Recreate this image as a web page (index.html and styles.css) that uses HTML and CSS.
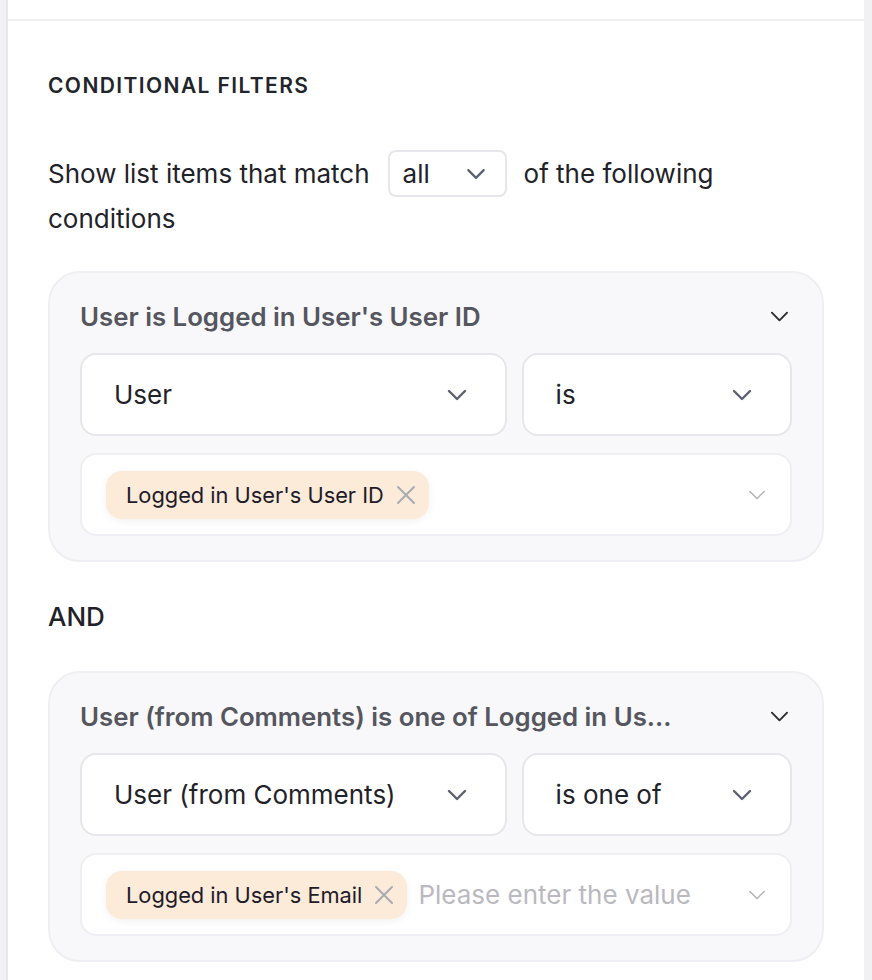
FILE: index.html
```html
<!DOCTYPE html>
<html>
<head>
<meta charset="utf-8">
<link rel="stylesheet" href="styles.css">
</head>
<body>
<div class="panel">
  <div class="prev"></div>
  <section class="filters">
    <h2 class="heading">CONDITIONAL FILTERS</h2>
    <div class="intro"><span>Show list items that match</span><span class="mini-select"><span>all</span><svg class="chev-mini" viewBox="0 0 20 20"><path d="M3 6.5l7 7 7-7"/></svg></span><span>of the following</span><br><span>conditions</span></div>

    <div class="card">
      <div class="card-head">
        <span class="card-title">User is Logged in User's User ID</span>
        <svg class="chev-head" viewBox="0 0 20 20"><path d="M2 6l8 8 8-8"/></svg>
      </div>
      <div class="row">
        <div class="select"><span>User</span><svg class="chev" viewBox="0 0 20 20"><path d="M2 6l8 8 8-8"/></svg></div>
        <div class="select"><span>is</span><svg class="chev" viewBox="0 0 20 20"><path d="M2 6l8 8 8-8"/></svg></div>
      </div>
      <div class="value">
        <span class="tag">Logged in User's User ID<svg class="x" viewBox="0 0 20 20"><path d="M2 2l16 16M18 2L2 18"/></svg></span>
        <span class="placeholder"></span>
        <svg class="chev-light" viewBox="0 0 20 20"><path d="M2 6l8 8 8-8"/></svg>
      </div>
    </div>

    <div class="and">AND</div>

    <div class="card">
      <div class="card-head">
        <span class="card-title">User (from Comments) is one of Logged in Us...</span>
        <svg class="chev-head" viewBox="0 0 20 20"><path d="M2 6l8 8 8-8"/></svg>
      </div>
      <div class="row">
        <div class="select"><span>User (from Comments)</span><svg class="chev" viewBox="0 0 20 20"><path d="M2 6l8 8 8-8"/></svg></div>
        <div class="select"><span>is one of</span><svg class="chev" viewBox="0 0 20 20"><path d="M2 6l8 8 8-8"/></svg></div>
      </div>
      <div class="value">
        <span class="tag">Logged in User's Email<svg class="x" viewBox="0 0 20 20"><path d="M2 2l16 16M18 2L2 18"/></svg></span>
        <span class="placeholder">Please enter the value</span>
        <svg class="chev-light" viewBox="0 0 20 20"><path d="M2 6l8 8 8-8"/></svg>
      </div>
    </div>
  </section>
</div>
</body>
</html>
```
FILE: styles.css
```css
html, body {
  margin: 0;
  padding: 0;
}
body {
  background: #f1f1f4;
  font-family: Inter, "Noto Sans", sans-serif;
  color: #1f2329;
  padding: 0 8px 0 6px;
  height: 980px;
  overflow: hidden;
}
.panel {
  background: #ffffff;
  height: 980px;
  border-left: 2px solid #e7e7eb;
}
.prev {
  height: 19px;
  border-bottom: 2px solid #efeff2;
}
.filters {
  padding: 53px 40px 0 40px;
}
.heading {
  margin: 0;
  font-size: 21px;
  line-height: 24px;
  font-weight: 600;
  letter-spacing: 1.4px;
  color: #22252b;
}
.intro {
  margin: 54px 0 0 0;
  font-size: 26px;
  line-height: 44px;
  color: #1f2329;
  width: 720px;
}
.mini-select {
  display: inline-flex;
  align-items: center;
  justify-content: space-between;
  box-sizing: border-box;
  width: 119px;
  height: 47px;
  margin: -2px 17px -2px 18px;
  padding: 0 18px 0 13px;
  border: 2px solid #e6e6eb;
  border-radius: 8px;
  vertical-align: middle;
  position: relative;
  top: -2px;
}
.chev-mini {
  width: 22px;
  height: 22px;
  fill: none;
  stroke: #5b6070;
  stroke-width: 2;
  stroke-linecap: round;
  stroke-linejoin: round;
}
.card {
  margin-top: 30px;
  box-sizing: border-box;
  width: 776px;
  height: 291px;
  background: #f8f8fa;
  border: 2px solid #efeff3;
  border-radius: 32px;
  padding: 23px 30px 24px 30px;
}
.card-head {
  display: flex;
  align-items: center;
  justify-content: space-between;
  height: 40px;
}
.card-title {
  font-size: 25.8px;
  font-weight: 600;
  color: #55565e;
}
.chev-head {
  width: 19px;
  height: 19px;
  margin-right: 3px;
  fill: none;
  stroke: #2b2d33;
  stroke-width: 2;
  stroke-linecap: round;
  stroke-linejoin: round;
}
.row {
  margin-top: 17px;
  display: grid;
  grid-template-columns: minmax(0, 426fr) minmax(0, 270fr);
  gap: 15px;
}
.select {
  box-sizing: border-box;
  height: 83px;
  background: #ffffff;
  border: 2px solid #e6e6eb;
  border-radius: 16px;
  display: flex;
  align-items: center;
  justify-content: space-between;
  padding: 0 38px 0 32px;
  font-size: 26px;
  color: #1f2329;
}
.chev {
  width: 20px;
  height: 20px;
  fill: none;
  stroke: #5b6070;
  stroke-width: 2.4;
  stroke-linecap: round;
  stroke-linejoin: round;
}
.value {
  margin-top: 17px;
  box-sizing: border-box;
  height: 83px;
  background: #ffffff;
  border: 2px solid #efeff3;
  border-radius: 16px;
  display: flex;
  align-items: center;
  padding: 0 24px 0 24px;
}
.tag {
  display: inline-flex;
  align-items: center;
  gap: 12px;
  height: 48px;
  box-sizing: border-box;
  padding: 0 13px 0 20px;
  background: #fbebd8;
  border-radius: 16px;
  box-shadow: 0 2px 8px rgba(0, 0, 0, 0.06);
  font-size: 21.8px;
  color: #221a2a;
}
.x {
  width: 20px;
  height: 20px;
  fill: none;
  stroke: #a9abb2;
  stroke-width: 2;
  stroke-linecap: round;
}
.placeholder {
  flex: 1;
  margin-left: 11px;
  font-size: 26px;
  color: #b9b9bf;
}
.chev-light {
  width: 18px;
  height: 18px;
  fill: none;
  stroke: #b1b2b9;
  stroke-width: 1.6;
  stroke-linecap: round;
  stroke-linejoin: round;
}
.and {
  margin-top: 39px;
  font-size: 26px;
  line-height: 32px;
  font-weight: 500;
  color: #1f2329;
}
.and + .card {
  margin-top: 38px;
}
```
